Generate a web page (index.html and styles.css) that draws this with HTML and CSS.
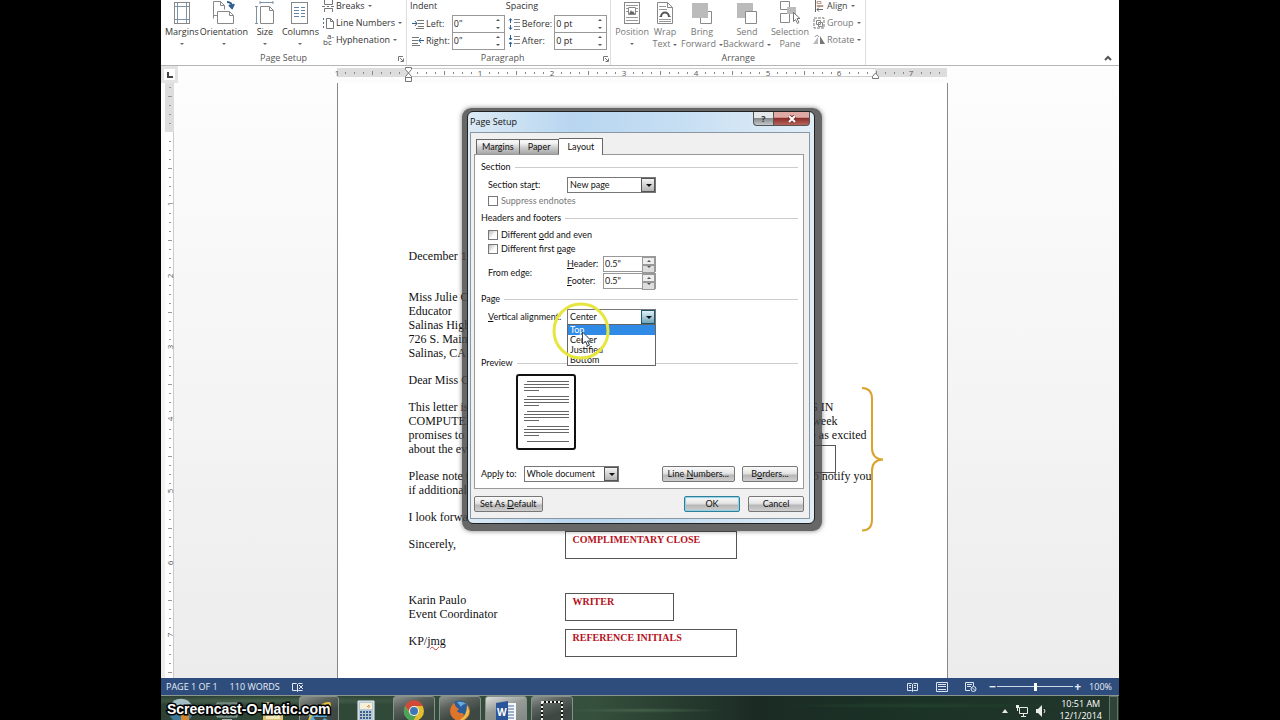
FILE: index.html
```
<!DOCTYPE html>
<html lang="en">
    <head>
        <meta charset="utf-8">
        <meta name="viewport" content="width=device-width, initial-scale=1">
        <title>Page Setup</title>
        <link rel="stylesheet" href="styles.css">
    </head>
    <body>
        <div class="screen">
            <div class="ribbon">
                <div class="group">
                    <div class="tools">
                        <button class="big">
                            <svg width="18" height="24" viewBox="0 0 18 24"><rect x="1.500" y="1.500" width="15" height="21" fill="#fff" stroke="#888"/><path d="M4.500 2v20M13.500 2v20M2 5.500h14M2 18.500h14" stroke="#7d93a8" fill="none"/></svg>
                            <span>Margins</span><i class="arrow"></i>
                        </button>
                        <button class="big">
                            <svg width="24" height="24" viewBox="0 0 24 24"><path d="M1.500 17.500V.500h7l4 4v4M8.500.500v4h4M1.500 14.500h4" fill="none" stroke="#888"/><path d="M5.500 10.500h12l4 4v8h-16zM17.500 10.500v4h4" fill="#fff" stroke="#888"/><path d="M15 1c4 0 5 2 5 5M17 4l3 3 2-4" fill="none" stroke="#2f5f8f" stroke-width="2"/></svg>
                            <span>Orientation</span><i class="arrow"></i>
                        </button>
                        <button class="big">
                            <svg width="20" height="24" viewBox="0 0 20 24"><path d="M5.500 5.500h9l4 4v13h-13zM14.500 5.500v4h4" fill="#fff" stroke="#888"/><path d="M5 1.500h13M5 0v3M18 0v3M1.500 5v17M0 5.500h3M0 22.500h3" stroke="#7d93a8" fill="none"/></svg>
                            <span>Size</span><i class="arrow"></i>
                        </button>
                        <button class="big">
                            <svg width="18" height="24" viewBox="0 0 18 24"><rect x=".500" y="1.500" width="16" height="21" fill="#fff" stroke="#888"/><path d="M3 6.500h5M10 6.500h4M3 9.500h5M10 9.500h4M3 12.500h5M10 12.500h4M3 15.500h5M10 15.500h4" stroke="#6384a6"/></svg>
                            <span>Columns</span><i class="arrow"></i>
                        </button>
                        <div class="stack">
                            <button class="small"><svg width="12" height="12" viewBox="0 0 12 12"><path d="M2.500 0v4.500h8V0M2.500 12V8.500h8V12M0 6.500h3M5 6.500h2M9 6.500h3" fill="none" stroke="#777"/></svg>Breaks<i class="arrow"></i></button>
                            <button class="small"><svg width="12" height="12" viewBox="0 0 12 12"><path d="M4.500 1.500h4l3 3v7h-7zM8.500 1.500v3h3" fill="none" stroke="#777"/><path d="M1.500 1v10" stroke="#4f7399" stroke-dasharray="2 2"/></svg>Line Numbers<i class="arrow"></i></button>
                            <button class="small"><svg width="12" height="14" viewBox="0 0 12 14"><g fill="#444" font-size="8"><text x="5" y="6">a-</text><text x="1" y="12">bc</text></g></svg>Hyphenation<i class="arrow"></i></button>
                        </div>
                    </div>
                    <div class="caption">Page Setup<svg class="launcher" width="6" height="6" viewBox="0 0 6 6"><path d="M.500 5V.500H5M2 2l3 3M5.500 2.500v3h-3" fill="none" stroke="#777"/></svg></div>
                </div>

                <div class="group paragraph">
                    <div class="tools">
                        <div class="measures">
                            <div class="measures-title">Indent</div>
                            <label for="left"><svg width="12" height="10" viewBox="0 0 12 10"><path d="M5 1.500h7M6 4.500h6M6 7.500h6M4 9.500h8" stroke="#777"/><path d="M0 4.500h5M3 2l2 2.500L3 7" stroke="#2f5f8f" fill="none"/></svg>Left:</label>
                            <span class="spin"><input id="left" value='0"'><i class="up"></i><i class="down"></i></span>
                            <label for="right"><svg width="12" height="10" viewBox="0 0 12 10"><path d="M0 1.500h7M0 4.500h6M0 7.500h6M0 9.500h8" stroke="#777"/><path d="M12 4.500H7M9 2L7 4.500 9 7" stroke="#2f5f8f" fill="none"/></svg>Right:</label>
                            <span class="spin"><input id="right" value='0"'><i class="up"></i><i class="down"></i></span>
                        </div>
                        <div class="measures">
                            <div class="measures-title">Spacing</div>
                            <label for="before"><svg width="12" height="12" viewBox="0 0 12 12"><path d="M6 1.500h6M6 4.500h6M6 8.500h6M6 11.500h6" stroke="#888"/><path d="M2.500 5V1M1 2.500l1.500-2 1.500 2M2.500 7v4M1 9.500l1.500 2 1.500-2" stroke="#2f5f8f" fill="none"/></svg>Before:</label>
                            <span class="spin"><input id="before" value="0 pt"><i class="up"></i><i class="down"></i></span>
                            <label for="after"><svg width="12" height="12" viewBox="0 0 12 12"><path d="M6 1.500h6M6 4.500h6M6 8.500h6" stroke="#888"/><path d="M2.500 0v5M1 3l1.500 2L4 3M2.500 12V7M1 9l1.500-2L4 9" stroke="#2f5f8f" fill="none"/></svg>After:</label>
                            <span class="spin"><input id="after" value="0 pt"><i class="up"></i><i class="down"></i></span>
                        </div>
                    </div>
                    <div class="caption">Paragraph<svg class="launcher" width="6" height="6" viewBox="0 0 6 6"><path d="M.500 5V.500H5M2 2l3 3M5.500 2.500v3h-3" fill="none" stroke="#777"/></svg></div>
                </div>

                <div class="group arrange">
                    <div class="tools">
                        <button class="big">
                            <svg width="18" height="24" viewBox="0 0 18 24"><rect x="1.500" y="1.500" width="15" height="21" fill="#fff" stroke="#888"/><path d="M3 4.500h12M3 7.500h2M13 7.500h2M3 10.500h2M13 10.500h2M3 16.500h12M3 19.500h12" stroke="#999"/><path d="M5.500 6.500h7v7h-7z" fill="#fff" stroke="#888"/><path d="M6 13l2-4 1 2 1-1 2 3z" fill="#666"/></svg>
                            <span>Position</span><i class="arrow"></i>
                        </button>
                        <button class="big">
                            <svg width="18" height="24" viewBox="0 0 18 24"><path d="M1.500 1.500h10l5 5v16h-15zM11.500 1.500v5h5" fill="#fff" stroke="#888"/><path d="M3 5.500h7M3 8.500h8M3 18.500h12M3 15.500h2M13 15.500h2M3 20.500h12" stroke="#999"/><path d="M5 16c0-6 8-6 8 0" stroke="#555" stroke-width="2" fill="none"/></svg>
                            <span>Wrap</span><span>Text<i class="arrow"></i></span>
                        </button>
                        <button class="big">
                            <svg width="22" height="24" viewBox="0 0 22 24"><path d="M9.500 22.500h11v-12h-11z" fill="#fff" stroke="#888"/><path d="M1 2h16v15H1z" fill="#bbb"/></svg>
                            <span>Bring</span><span>Forward<i class="arrow"></i></span>
                        </button>
                        <button class="big">
                            <svg width="22" height="24" viewBox="0 0 22 24"><path d="M1 2h16v15H1z" fill="#bbb"/><path d="M9.500 22.500h11v-12h-11z" fill="#fff" stroke="#888"/></svg>
                            <span>Send</span><span>Backward<i class="arrow"></i></span>
                        </button>
                        <button class="big">
                            <svg width="22" height="24" viewBox="0 0 22 24"><path d="M1.500.500h9v8h-9zM1.500 12.500h9v9h-9z" fill="#fff" stroke="#888"/><path d="M8 6h9v7H8z" fill="#bbb"/><path d="M14.500 11.500v9l2-2 2 4 1.500-1-2-4h3z" fill="#fff" stroke="#777"/></svg>
                            <span>Selection</span><span>Pane</span>
                        </button>
                        <div class="stack">
                            <button class="small dark"><svg width="12" height="12" viewBox="0 0 12 12"><path d="M2.500 0v12M4 9.500h6M6 7.500l-2 2 2 2" stroke="#666" fill="none"/><path d="M4 1.500h4v2H4zM4 5.500h6v1H4z" fill="#fff" stroke="#b98"/></svg>Align<i class="arrow"></i></button>
                            <button class="small"><svg width="12" height="12" viewBox="0 0 12 12"><rect x="1" y="1" width="10" height="10" fill="none" stroke="#777" stroke-dasharray="3 1"/><path d="M3.500 3.500h4v4h-4zM5.500 5.500h4v4h-4z" fill="none" stroke="#888"/></svg>Group<i class="arrow"></i></button>
                            <button class="small"><svg width="12" height="12" viewBox="0 0 12 12"><path d="M0 10L5 3v7z" fill="#bbb"/><path d="M7 2v8h5z" fill="#777"/><path d="M2 3c1-2 3-2 4 0" fill="none" stroke="#888"/></svg>Rotate<i class="arrow"></i></button>
                        </div>
                    </div>
                    <div class="caption">Arrange</div>
                </div>
                <button class="collapse" aria-label="Collapse the ribbon"><svg width="8" height="6" viewBox="0 0 8 6"><path d="M1 5l3-3 3 3" fill="none" stroke="#555" stroke-width="2"/></svg></button>
            </div>

            <div class="workspace">
                <div class="ruler-side">
                    <div class="tabstop"><svg width="6" height="6" viewBox="0 0 6 6"><path d="M1 0v5h5" fill="none" stroke="#444" stroke-width="2"/></svg></div>
                    <svg class="ruler-v" width="9" height="595" viewBox="0 0 9 595">
                        <defs><pattern id="vticks" width="9" height="72" patternUnits="userSpaceOnUse" y="49"><path d="M4 9.500h2M4 18.500h2M4 27.500h2M3 36.500h4M4 45.500h2M4 54.500h2M4 63.500h2" stroke="#999"/></pattern></defs>
                        <rect width="9" height="595" fill="#fff"/><rect width="9" height="49" fill="#ddd"/>
                        <rect width="9" height="595" fill="url(#vticks)"/><path d="M8.500 49v546" stroke="#ccc"/>
                        <g class="ruler-text"><text transform="translate(8 121) rotate(-90)">1</text><text transform="translate(8 193) rotate(-90)">2</text><text transform="translate(8 264) rotate(-90)">3</text><text transform="translate(8 336) rotate(-90)">4</text><text transform="translate(8 408) rotate(-90)">5</text><text transform="translate(8 480) rotate(-90)">6</text><text transform="translate(8 552) rotate(-90)">7</text></g>
                    </svg>
                </div>
                <div class="canvas">
                    <svg class="ruler-h" width="610" height="16" viewBox="0 0 610 16">
                        <defs><pattern id="hticks" width="72" height="10" patternUnits="userSpaceOnUse" x="71" y="2"><path d="M9.500 4v2M18.500 4v2M27.500 4v2M36.500 3v4M45.500 4v2M54.500 4v2M63.500 4v2" stroke="#888"/></pattern></defs>
                        <rect y="2" width="610" height="9" fill="#fff"/><path d="M71 2.500h467M71 10.500h467" stroke="#ccc"/>
                        <rect y="2" width="71" height="9" fill="#ddd"/><rect x="538" y="2" width="72" height="9" fill="#ddd"/>
                        <rect y="2" width="610" height="9" fill="url(#hticks)"/>
                        <g class="ruler-text"><text x="0" y="10">1</text><text x="143" y="10">1</text><text x="215" y="10">2</text><text x="287" y="10">3</text><text x="359" y="10">4</text><text x="431" y="10">5</text><text x="502" y="10">6</text><text x="574" y="10">7</text></g>
                        <path d="M68.500 1.500h6v2l-3 3.500 3 3.500v5h-6v-5l3-3.500-3-3.500zM68.500 11.500h6M535.500 12.500v-2l3-3.500 3 3.500v2z" fill="#fff" stroke="#777"/>
                    </svg>
                    <div class="page">
                        <p class="after-2">December 1, 2014</p>
                        <p>Miss Julie Campos<br>Educator<br>Salinas High School<br>726 S. Main Street<br>Salinas, CA 93901</p>
                        <p>Dear Miss Campos:</p>
                        <p class="wide"><span>This letter is to confirm</span><span>SS IN</span>
                            <span>COMPUTER EDUCATION</span><span>s week</span>
                            <span>promises to be the best</span><span>be as excited</span>
                            <span>about the event as we are.</span></p>
                        <p class="wide notice"><span>Please note that we are going</span><span>to notify you</span>
                            <span>if additional details arise.</span></p>
                        <p>I look forward to seeing you.</p>
                        <p class="after-3">Sincerely,</p>
                        <p>Karin Paulo<br>Event Coordinator</p>
                        <p>KP/<span class="misspelt">jmg</span></p>

                        <div class="callout body-note"></div>
                        <div class="callout close-note">COMPLIMENTARY CLOSE</div>
                        <div class="callout writer-note">WRITER</div>
                        <div class="callout initials-note">REFERENCE INITIALS</div>
                        <svg class="brace" width="24" height="146" viewBox="0 0 24 146"><path d="M1 1q10 0 10 11v49q0 11 11 11.500q-11 .500-11 11v49q0 11-10 11" fill="none" stroke="#daa32c" stroke-width="2"/></svg>
                    </div>
                </div>
            </div>

            <div class="status">
                <span>PAGE 1 OF 1</span>
                <span>110 WORDS</span>
                <svg width="12" height="10" viewBox="0 0 12 10"><path d="M.500 1.500h4l1 1v7l-1-1h-4zM5.500 2.500l1-1h4M5.500 9.500l1-1h4M7 3l4 4M11 3L7 7" fill="none" stroke="#e4ebf5"/></svg>
                <div class="views">
                    <svg width="12" height="10" viewBox="0 0 12 10"><path d="M.500 1.500h4l1 1 1-1h4v7h-4l-1 1-1-1h-4zM5.500 2v7M2 3.500h2M2 5.500h2M7 3.500h2M7 5.500h2" fill="none" stroke="#dbe4f0"/></svg>
                    <svg width="12" height="10" viewBox="0 0 12 10"><path d="M.500.500h11v9H.500zM2 2.500h8M2 4.500h8M2 7.500h8" fill="none" stroke="#dbe4f0"/></svg>
                    <svg width="12" height="10" viewBox="0 0 12 10"><path d="M5 8.500H.500v-8h8V4M2 2.500h5M2 4.500h4" fill="none" stroke="#dbe4f0"/><circle cx="8.500" cy="7" r="2.500" fill="none" stroke="#dbe4f0"/><path d="M7 5.500l3 3" stroke="#dbe4f0"/></svg>
                </div>
                <div class="zoom">
                    <button aria-label="Zoom out">&minus;</button>
                    <input type="range" min="10" max="190" value="100" aria-label="Zoom">
                    <button aria-label="Zoom in">+</button>
                </div>
                <span class="percent">100%</span>
            </div>

            <div class="taskbar">
                <div class="brand">Screencast-O-Matic.com</div>
                <div class="pinned">
                    <svg width="26" height="26" viewBox="0 0 26 26"><circle cx="13" cy="13" r="12" fill="#3b7899"/><path d="M2 8a12 12 0 0 1 22 0q-11 4-22 0" fill="#a4bdc6"/><path d="M13 14h8v8h-8z" fill="#d2862e"/></svg>
                    <svg width="26" height="26" viewBox="0 0 26 26"><path d="M3 5h20v14H3z" fill="#506963" stroke="#94aaa3"/><path d="M8 21h10v3H8z" fill="#a0b0ac"/></svg>
                    <svg width="26" height="26" viewBox="0 0 26 26"><path d="M3 4h7l2 3h11v17H3z" fill="#d9c474"/><path d="M6 9h14v12H6z" fill="#f2eaba"/></svg>
                </div>
                <button class="task ie" aria-label="Internet Explorer"><svg width="24" height="26" viewBox="0 0 24 26"><path d="M20 15H5M19 19a8 8 0 1 1 1-5" fill="none" stroke="#55a9d8" stroke-width="4"/><path d="M3 23C-1 18 15 2 22 3q2 1 0 5" fill="none" stroke="#e8bd37" stroke-width="2"/></svg></button>
                <button class="task plain" aria-label="Calculator"><svg width="18" height="24" viewBox="0 0 18 24"><path d="M1 1h16v23H1z" fill="#b9cad6" stroke="#e9f0f3"/><path d="M3 3h12v6H3z" fill="#f6f1d6"/><path d="M10 7l2-2v3" stroke="#cc8845" fill="none"/><path d="M3 12h12M3 15h12M3 18h12M3 21h12" stroke="#3c618a" stroke-width="2" stroke-dasharray="2 1"/></svg></button>
                <button class="task" aria-label="Chrome"><svg width="22" height="22" viewBox="0 0 22 22"><circle cx="11" cy="11" r="10" fill="#e4bd2e"/><path d="M2 6a10 10 0 0 1 18 0H11l-4 7z" fill="#d04a37"/><path d="M2 6l5 8 6 2-3 5A10 10 0 0 1 2 6z" fill="#4ba258"/><circle cx="11" cy="11" r="5" fill="#f3f4f1"/><circle cx="11" cy="11" r="4" fill="#3e76b5"/></svg></button>
                <button class="task" aria-label="Firefox"><svg width="22" height="22" viewBox="0 0 22 22"><circle cx="11" cy="11" r="10" fill="#df752a"/><path d="M5 2a10 10 0 0 1 12 1q4 4 2 9-1 4-5 5 2-3-1-4-4 0-5-2l2-2-3-2q-1-2-2-5z" fill="#2c5c99"/><path d="M8 2q6-1 9 2-4 0-5 3-2-3-4-5z" fill="#69aedb"/><path d="M18 5q5 8-1 13-3 3-8 3 9-4 9-16z" fill="#edbd48"/></svg></button>
                <button class="task active" aria-label="Word"><svg width="22" height="24" viewBox="0 0 22 24"><path d="M10 3h11v18H10z" fill="#f4f7fa"/><path d="M13 6h6M13 9h6M13 12h6M13 15h6M13 18h6" stroke="#496e9f"/><path d="M1 3l12-2v22L1 21z" fill="#2b5599"/><text x="2" y="16" font-size="10" font-weight="bold" fill="#fff">W</text></svg></button>
                <button class="task" aria-label="Screen recorder"><svg width="22" height="22" viewBox="0 0 22 22"><rect x="1" y="2" width="20" height="19" fill="none" stroke="#111" stroke-width="2"/><rect x="1" y="2" width="20" height="19" fill="none" stroke="#eee" stroke-width="2" stroke-dasharray="2 2"/></svg></button>
                <div class="tray">
                    <svg width="6" height="4" viewBox="0 0 6 4"><path d="M0 4l3-4 3 4z" fill="#e4e9e6"/></svg>
                    <svg width="12" height="12" viewBox="0 0 12 12"><path d="M3.500 2.500h8v6h-8zM5 11.500h5M7.500 9v2M1.500 0v6" fill="none" stroke="#e8edeb"/><path d="M0 0h3v3H0z" fill="#e8edeb"/></svg>
                    <svg width="10" height="12" viewBox="0 0 10 12"><path d="M0 4h2l4-4v12L2 8H0z" fill="#e8edeb"/><path d="M8 4q2 2 0 4" fill="none" stroke="#e8edeb"/></svg>
                </div>
                <div class="clock">10:51 AM<br>12/1/2014</div>
                <button class="peek" aria-label="Show desktop"></button>
            </div>

            <form class="dialog" role="dialog" aria-labelledby="dialog-title">
                <div class="frame">
                    <div class="titlebar">
                        <span id="dialog-title">Page Setup</span>
                        <button type="button" class="help" aria-label="Help">?</button>
                        <button type="button" class="shut" aria-label="Close"><svg width="10" height="8" viewBox="0 0 10 8"><path d="M2 1l6 6M8 1L2 7" stroke="#733" stroke-width="4"/><path d="M2 1l6 6M8 1L2 7" stroke="#fff" stroke-width="2"/></svg></button>
                    </div>
                    <div class="client">
                        <div class="tabs">
                            <button type="button">Margins</button><button type="button">Paper</button><button type="button" class="current">Layout</button>
                        </div>
                        <div class="panel">
                            <h2>Section</h2>
                            <div class="row">
                                <label class="name" for="start">Section sta<u>r</u>t:</label>
                                <span class="combo"><select id="start"><option>New page</option></select></span>
                            </div>
                            <label class="check off"><input type="checkbox" disabled><span>Suppress endnotes</span></label>
                            <h2>Headers and footers</h2>
                            <label class="check"><input type="checkbox"><span>Different <u>o</u>dd and even</span></label>
                            <label class="check"><input type="checkbox"><span>Different first <u>p</u>age</span></label>
                            <div class="row">
                                <span class="name">From edge:</span>
                                <div class="edges">
                                    <label for="header"><u>H</u>eader:</label><span class="spin"><input id="header" value='0.5"'><i class="up"></i><i class="down"></i></span>
                                    <label for="footer"><u>F</u>ooter:</label><span class="spin"><input id="footer" value='0.5"'><i class="up"></i><i class="down"></i></span>
                                </div>
                            </div>
                            <h2>Page</h2>
                            <div class="row">
                                <label class="name" for="valign"><u>V</u>ertical alignment:</label>
                                <span class="combo open">
                                    <select id="valign"><option>Center</option></select>
                                    <ul class="options">
                                        <li class="picked">Top</li>
                                        <li>Center</li>
                                        <li>Justified</li>
                                        <li>Bottom</li>
                                    </ul>
                                    <svg class="pointer" width="60" height="60" viewBox="0 0 60 60"><circle cx="30" cy="30" r="27" fill="none" stroke="#e7e63f" stroke-width="3"/><path d="M31.500 31v12l3-3 2 5 2-1-2-4h4z" fill="#fff" stroke="#345"/></svg>
                                </span>
                            </div>
                            <h2 class="preview-title">Preview</h2>
                            <svg class="preview" width="60" height="76" viewBox="0 0 60 76"><rect x="1" y="1" width="58" height="74" rx="2" fill="#fff" stroke="#111" stroke-width="2"/><path d="M11 7.500h42M8 10.500h45M8 13.500h45M8 16.500h15M11 22.500h42M8 25.500h45M8 28.500h45M8 31.500h15M11 37.500h42M8 40.500h45M8 43.500h45M8 46.500h15M11 52.500h42M8 55.500h45M8 58.500h45M8 61.500h15M11 67.500h42" stroke="#666"/></svg>
                            <div class="apply">
                                <label for="apply">App<u>l</u>y to:</label>
                                <span class="combo"><select id="apply"><option>Whole document</option></select></span>
                                <button type="button" class="push first">Line <u>N</u>umbers...</button>
                                <button type="button" class="push">B<u>o</u>rders...</button>
                            </div>
                        </div>
                        <div class="actions">
                            <button type="button" class="push">Set As <u>D</u>efault</button>
                            <button type="button" class="push ok">OK</button>
                            <button type="button" class="push">Cancel</button>
                        </div>
                    </div>
                </div>
            </form>
        </div>
    </body>
</html>
```
FILE: styles.css
```
* {
    box-sizing: border-box;
}
body {
    margin: 0;
    background: #000;
    font: 9px/12px "Open Sans", "Noto Sans", sans-serif;
    color: #333;
}
button, input, select {
    font: inherit;
    color: inherit;
    margin: 0;
    padding: 0;
    border: 0;
    background: none;
}
svg {
    display: block;
    flex: none;
}
svg text {
    font-family: "Open Sans", sans-serif;
}
.screen {
    position: relative;
    display: flex;
    flex-direction: column;
    max-width: 958px;
    height: 100vh;
    margin: 0 auto;
    overflow: hidden;
    background: #fff;
}

/* ribbon */
.ribbon {
    display: flex;
    flex: none;
    border-bottom: 1px solid #b5b5b5;
}
.group {
    display: flex;
    flex-direction: column;
    padding: 0 4px 1px;
    border-right: 1px solid #ddd;
}
.tools {
    display: flex;
    gap: 1px;
    height: 52px;
}
.caption {
    position: relative;
    text-align: center;
    color: #555;
}
.launcher {
    position: absolute;
    right: -2px;
    bottom: 2px;
}
.big {
    display: flex;
    flex-direction: column;
    align-items: center;
    min-width: 32px;
    padding-top: 1px;
}
.big svg {
    margin-bottom: 1px;
}
.arrow {
    display: inline-block;
    border: 2px solid transparent;
    border-top-color: #666;
    border-bottom: 0;
}
.big > .arrow {
    margin-top: 5px;
}
.big span .arrow {
    margin-left: 3px;
    vertical-align: middle;
}
.stack {
    display: flex;
    flex-direction: column;
    gap: 5px;
    padding-left: 2px;
}
.small {
    display: flex;
    align-items: center;
    gap: 2px;
    height: 12px;
    white-space: nowrap;
}
.small .arrow {
    margin-left: 1px;
}
.paragraph {
    padding: 0 3px 1px;
}
.paragraph .caption {
    padding-right: 12px;
}
.measures {
    display: grid;
    grid-template-columns: auto 53px;
    grid-template-rows: 15px 17px 18px;
    align-content: start;
}
.measures-title {
    grid-column: 1 / 3;
}
.measures label {
    display: flex;
    align-items: center;
    gap: 2px;
    padding: 0 2px;
}
.spin {
    position: relative;
    display: flex;
    height: 18px;
    border: 1px solid #999;
    background: #fff;
}
.spin input {
    width: 100%;
    padding-left: 1px;
    color: #222;
}
.spin i {
    position: absolute;
    right: 4px;
    border: 2px solid transparent;
}
.spin .up {
    top: 3px;
    border-top: 0;
    border-bottom-color: #555;
}
.spin .down {
    bottom: 3px;
    border-bottom: 0;
    border-top-color: #555;
}
.arrange {
    color: #777;
}
.arrange .tools {
    gap: 0;
}
.arrange .stack {
    padding-left: 4px;
}
.arrange .dark {
    color: #444;
}
.collapse {
    margin-left: auto;
    align-self: flex-end;
    padding: 0 7px 4px;
}

/* document */
.workspace {
    display: flex;
    flex: 1;
    min-height: 0;
    overflow: hidden;
    background: linear-gradient(#fdfdfd, #f5f5f5 50%, #ececec);
}
.ruler-side {
    width: 17px;
}
.tabstop {
    display: grid;
    place-items: center;
    height: 17px;
    border: 3px solid #e3e3e3;
    background: #fff;
}
.ruler-v {
    margin-left: 4px;
}
.ruler-text {
    fill: #555;
    font-size: 8px;
    text-anchor: middle;
}
.canvas {
    display: flex;
    flex: 1;
    flex-direction: column;
    align-items: center;
    padding-right: 13px;
}
.ruler-h {
    margin-bottom: 1px;
    overflow: visible;
}
.page {
    position: relative;
    flex: none;
    width: 100%;
    max-width: 611px;
    min-height: 100%;
    padding: 166px 71px 0;
    border: 1px solid #888;
    border-width: 0 1px;
    background: #fff;
    color: #111;
    font: 12px/14px "Liberation Serif", "Times New Roman", serif;
}
.page p {
    margin: 0 0 13px;
}
.page .after-2 {
    margin-bottom: 27px;
}
.page .after-3 {
    margin-bottom: 42px;
}
.wide {
    display: grid;
    grid-template-columns: 396px 1fr;
    white-space: nowrap;
}
.notice {
    grid-template-columns: 401px 1fr;
}
.misspelt {
    text-decoration: underline wavy #c33 1px;
}
.callout {
    position: absolute;
    left: 227px;
    height: 28px;
    padding: 1px 7px;
    border: 1px solid #555;
    color: #b5121b;
    font-size: 10px;
    font-weight: bold;
}
.body-note {
    top: 362px;
    left: 400px;
    width: 98px;
}
.close-note {
    top: 448px;
    width: 172px;
}
.writer-note {
    top: 510px;
    width: 109px;
}
.initials-note {
    top: 546px;
    width: 172px;
}
.brace {
    position: absolute;
    top: 304px;
    left: 523px;
}

/* status bar */
.status {
    display: flex;
    flex: none;
    align-items: center;
    gap: 12px;
    height: 17px;
    padding: 0 7px 0 5px;
    background: #2e4d7c;
    color: #e8eef7;
}
.views {
    display: flex;
    gap: 17px;
    margin-left: auto;
}
.zoom {
    display: flex;
    align-items: center;
    gap: 1px;
}
.zoom button {
    font-size: 12px;
    font-weight: bold;
}
.zoom input {
    width: 76px;
    height: 10px;
    appearance: none;
    background: linear-gradient(#cfd9e8, #cfd9e8) center / 100% 1px no-repeat;
}
.zoom input::-webkit-slider-thumb {
    appearance: none;
    width: 3px;
    height: 8px;
    background: #fff;
}
.percent {
    margin-left: -4px;
}

/* taskbar */
.taskbar {
    position: relative;
    display: flex;
    flex: none;
    align-items: flex-start;
    height: 25px;
    overflow: hidden;
    border-top: 1px solid #8b968f;
    background:
        radial-gradient(ellipse at 10% 20%, #4a6350, transparent 16%),
        radial-gradient(ellipse at 50% 60%, #45614c, transparent 12%),
        radial-gradient(ellipse at 80% 40%, #21402c, transparent 14%),
        linear-gradient(90deg, #2d4234, #35503c 45%, #1b2b24 62%, #1b3326 80%, #23362b);
}
.brand {
    position: absolute;
    z-index: 1;
    top: 4px;
    left: 6px;
    color: #fff;
    font: bold 14px/18px "Liberation Sans", Arial, sans-serif;
    -webkit-text-stroke: 3px #000;
    paint-order: stroke fill;
}
.pinned {
    display: flex;
    gap: 20px;
    padding: 2px 13px 0 7px;
}
.task {
    display: flex;
    justify-content: center;
    width: 42px;
    height: 30px;
    margin-right: 4px;
    padding-top: 3px;
    border: 1px solid #87908a;
    border-radius: 3px;
    background: linear-gradient(160deg, #8d938f, #5b625e 30%, #3e4842 60%);
}
.task.ie {
    width: 40px;
}
.task.plain {
    width: 46px;
    border-color: transparent;
    background: none;
}
.task.active {
    background: linear-gradient(160deg, #dcdedc, #969b98 40%, #7b827e);
}
.tray {
    display: flex;
    align-items: center;
    gap: 8px;
    margin-left: auto;
    height: 30px;
}
.clock {
    padding: 2px 7px 0 13px;
    color: #fff;
    text-align: center;
}
.peek {
    width: 9px;
    height: 30px;
    margin-right: 1px;
    border: 1px solid #62756a;
    background: #304338;
}

/* page setup dialog */
.dialog {
    position: absolute;
    top: 108px;
    left: 301px;
    width: 360px;
    margin: 0;
    padding: 3px 7px 7px 5px;
    border-radius: 9px;
    background: rgba(70, 70, 70, .82);
    box-shadow: 0 0 5px rgba(0, 0, 0, .5);
    color: #111;
    font-family: Lato, "Open Sans", sans-serif;
}
.frame {
    padding: 0 4px 4px 2px;
    border: 1px solid #222;
    border-radius: 6px;
    background: linear-gradient(90deg, #dceaf5, #b8d6f0 30%, #c5def3 60%, #e2eef7);
}
.titlebar {
    display: flex;
    align-items: flex-start;
    height: 20px;
    font-family: "Open Sans", sans-serif;
}
.titlebar span {
    flex: 1;
    padding-top: 4px;
}
.help, .shut {
    display: grid;
    place-items: center;
    height: 14px;
    border: 1px solid #555;
    border-top: 0;
}
.help {
    width: 21px;
    border-radius: 0 0 0 4px;
    background: linear-gradient(#e4e8eb 45%, #85898c 50%, #c4c8cb);
    color: #333;
    font-weight: bold;
}
.shut {
    width: 36px;
    border-left: 0;
    border-radius: 0 0 4px 0;
    background: linear-gradient(#e0aaa4 40%, #8d2f2a 50%, #b6655c);
}
.client {
    padding: 5px 5px 6px 3px;
    border: 1px solid #8997a3;
    background: #f0f0f0;
}
.tabs {
    display: flex;
    align-items: flex-end;
    padding-left: 2px;
}
.tabs button {
    height: 15px;
    padding: 0 5px;
    border: 1px solid #666;
    border-bottom: 0;
    background: linear-gradient(#f5f5f5 20%, #ccc 55%, #a5a5a5);
}
.tabs button + button {
    padding: 0 8px;
    border-left: 0;
}
.tabs .current {
    height: 17px;
    margin-bottom: -1px;
    padding-bottom: 1px;
    background: #fff;
}
.panel {
    padding: 6px 5px 6px 6px;
    border: 1px solid #999;
    background: #fff;
}
.panel h2 {
    display: flex;
    align-items: center;
    gap: 4px;
    margin: 4px 0;
    font: inherit;
}
.panel h2:first-child {
    margin-top: 0;
}
.panel h2::after {
    content: "";
    flex: 1;
    height: 1px;
    background: #ccc;
}
.row {
    display: flex;
    align-items: center;
    margin-left: 7px;
}
.name {
    width: 79px;
    white-space: nowrap;
}
.combo {
    position: relative;
    display: flex;
    width: 89px;
    height: 16px;
    border: 1px solid #777;
}
.combo select {
    width: 100%;
    padding-left: 2px;
    appearance: none;
    background: #fff;
}
.combo::before {
    content: "";
    position: absolute;
    top: 0;
    right: 0;
    bottom: 0;
    width: 12px;
    border: 1px solid #555;
    background: linear-gradient(#f3f3f3, #b4b4b4);
}
.combo::after {
    content: "";
    position: absolute;
    top: 6px;
    right: 3px;
    border: 3px solid transparent;
    border-top-color: #111;
    border-bottom: 0;
}
.combo.open::before {
    border-color: #256;
    background: linear-gradient(#dff1f7, #6fa6bc);
}
.options {
    position: absolute;
    z-index: 2;
    top: 14px;
    left: -1px;
    right: -1px;
    margin: 0;
    padding: 0;
    border: 1px solid #666;
    background: #fff;
    list-style: none;
}
.options li {
    height: 10px;
    padding-left: 2px;
    line-height: 10px;
}
.options .picked {
    background: #2f8be6;
    color: #fff;
}
.pointer {
    position: absolute;
    z-index: 3;
    top: -9px;
    left: -17px;
}
.check {
    display: flex;
    align-items: center;
    gap: 3px;
    height: 14px;
    margin-left: 7px;
}
.check input {
    width: 10px;
    height: 10px;
    border: 1px solid #777;
    appearance: none;
    background: linear-gradient(135deg, #bbb, #fff 60%);
}
.check.off {
    margin-top: 1px;
    color: #777;
}
.check.off input {
    background: #fff;
}
.edges {
    display: grid;
    grid-template-columns: 36px 53px;
    row-gap: 1px;
    align-items: center;
}
.edges .spin {
    height: 16px;
}
.edges .spin::before {
    content: "";
    position: absolute;
    top: 0;
    right: 0;
    width: 11px;
    height: 14px;
    border: 1px solid #999;
    background: linear-gradient(#eee 45%, #999 45%, #999 55%, #ddd 55%);
}
.panel .preview-title {
    margin-top: 32px;
}
.preview {
    margin: 5px 0 16px 35px;
}
.apply, .actions {
    display: flex;
    align-items: center;
    gap: 8px;
}
.apply {
    gap: 7px;
}
.apply .combo {
    width: 95px;
}
.push {
    min-width: 56px;
    height: 16px;
    padding: 0 5px;
    border: 1px solid #777;
    border-radius: 2px;
    background: linear-gradient(#fafafa, #e5e5e5 45%, #b8b8b8 60%, #cfcfcf);
    white-space: nowrap;
}
.push.first {
    margin-left: auto;
}
.push.ok {
    margin-left: auto;
    border-color: #2f7f98;
    box-shadow: inset 0 0 1px 1px #8fd0e4;
}
.actions {
    padding-top: 7px;
}
```
